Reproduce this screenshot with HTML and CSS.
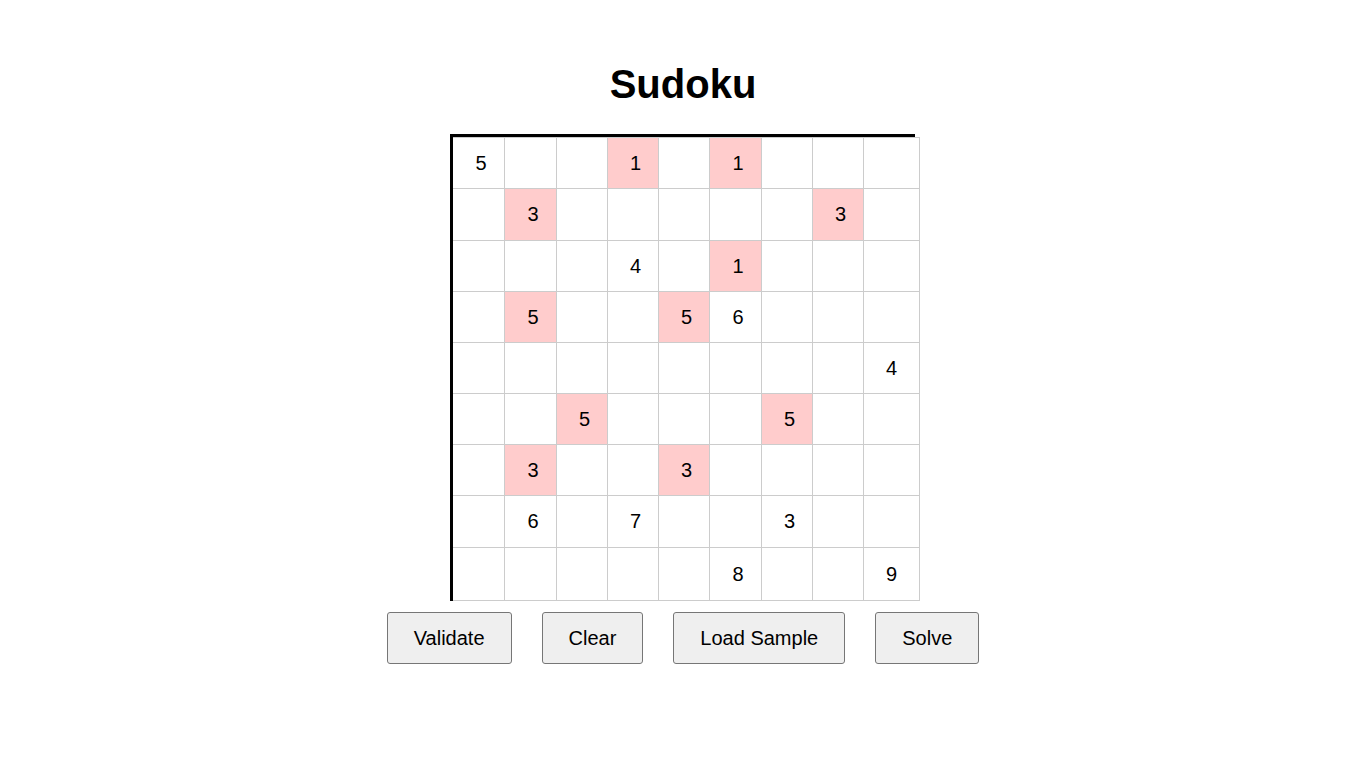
FILE: index.html
```html
<!DOCTYPE html>
<html lang="en">
<head>
<meta charset="utf-8">
<title>Sudoku</title>
<link rel="stylesheet" href="styles.css">
</head>
<body>
<main class="app">
  <h1 class="title">Sudoku</h1>
  <div class="board">
    <div class="grid">
      <div class="cell">5</div><div class="cell"></div><div class="cell"></div><div class="cell hl">1</div><div class="cell"></div><div class="cell hl">1</div><div class="cell"></div><div class="cell"></div><div class="cell"></div>
      <div class="cell"></div><div class="cell hl">3</div><div class="cell"></div><div class="cell"></div><div class="cell"></div><div class="cell"></div><div class="cell"></div><div class="cell hl">3</div><div class="cell"></div>
      <div class="cell"></div><div class="cell"></div><div class="cell"></div><div class="cell">4</div><div class="cell"></div><div class="cell hl">1</div><div class="cell"></div><div class="cell"></div><div class="cell"></div>
      <div class="cell"></div><div class="cell hl">5</div><div class="cell"></div><div class="cell"></div><div class="cell hl">5</div><div class="cell">6</div><div class="cell"></div><div class="cell"></div><div class="cell"></div>
      <div class="cell"></div><div class="cell"></div><div class="cell"></div><div class="cell"></div><div class="cell"></div><div class="cell"></div><div class="cell"></div><div class="cell"></div><div class="cell">4</div>
      <div class="cell"></div><div class="cell"></div><div class="cell hl">5</div><div class="cell"></div><div class="cell"></div><div class="cell"></div><div class="cell hl">5</div><div class="cell"></div><div class="cell"></div>
      <div class="cell"></div><div class="cell hl">3</div><div class="cell"></div><div class="cell"></div><div class="cell hl">3</div><div class="cell"></div><div class="cell"></div><div class="cell"></div><div class="cell"></div>
      <div class="cell"></div><div class="cell">6</div><div class="cell"></div><div class="cell">7</div><div class="cell"></div><div class="cell"></div><div class="cell">3</div><div class="cell"></div><div class="cell"></div>
      <div class="cell"></div><div class="cell"></div><div class="cell"></div><div class="cell"></div><div class="cell"></div><div class="cell">8</div><div class="cell"></div><div class="cell"></div><div class="cell">9</div>
    </div>
  </div>
  <div class="controls">
    <button class="btn" type="button">Validate</button>
    <button class="btn" type="button">Clear</button>
    <button class="btn" type="button">Load Sample</button>
    <button class="btn" type="button">Solve</button>
  </div>
</main>
</body>
</html>
```
FILE: styles.css
```css
html, body {
  margin: 0;
  padding: 0;
  background: #ffffff;
}

body {
  font-family: "Liberation Sans", Arial, sans-serif;
  color: #000000;
}

.app {
  display: flex;
  flex-direction: column;
  align-items: center;
  padding-top: 61px;
}

.title {
  margin: 0 0 27px;
  font-size: 40px;
  line-height: 46px;
  font-weight: bold;
}

.board {
  width: 462px;
  border-top: 3px solid #000000;
  border-left: 3px solid #000000;
  margin-right: 1px;
}

.grid {
  display: grid;
  width: 467px;
  grid-template-columns: 52px 52px 51px 51px 51px 52px 51px 51px 56px;
  grid-template-rows: 51px 52px 51px 51px 51px 51px 51px 52px 53px;
  border-top: 1px solid #cccccc;
}

.cell {
  box-sizing: border-box;
  border-right: 1px solid #cccccc;
  border-bottom: 1px solid #cccccc;
  display: flex;
  align-items: center;
  justify-content: center;
  padding-left: 5px;
  font-size: 20px;
  background: #ffffff;
}

.cell:nth-child(9n) {
  padding-left: 0;
}

.cell.hl {
  background: #ffcccc;
}

.controls {
  display: flex;
  gap: 30px;
  margin-top: 11px;
}

.btn {
  font-family: "Liberation Sans", Arial, sans-serif;
  font-size: 20px;
  line-height: 22px;
  padding: 14px 26px;
  background: #efefef;
  color: #000000;
  border: 1px solid #767676;
  border-radius: 3px;
}
```
